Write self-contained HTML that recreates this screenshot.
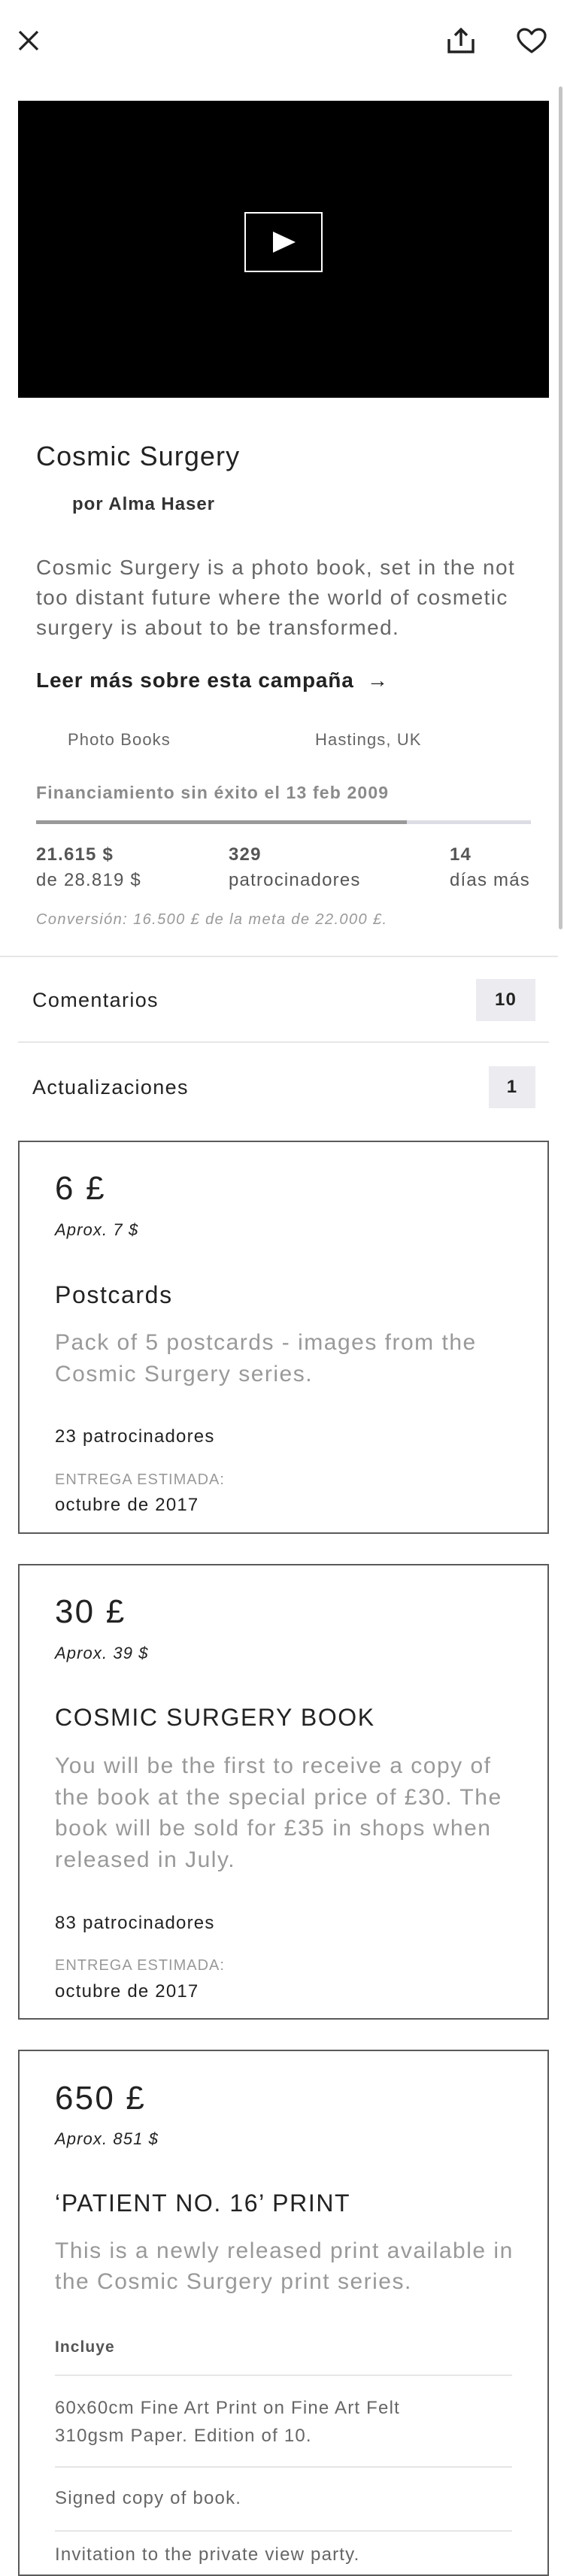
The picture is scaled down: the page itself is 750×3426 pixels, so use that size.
<!DOCTYPE html>
<html><head><meta charset="utf-8">
<style>
*{margin:0;padding:0;box-sizing:border-box}
html,body{width:750px;height:3400px;overflow:hidden;background:#fff;font-family:"Liberation Sans",sans-serif;color:#222}
#w{position:absolute;left:0;top:0;width:750px;height:3400px}
.a{position:absolute;white-space:nowrap;line-height:1;letter-spacing:0.05em}
.card{position:absolute;left:24px;width:706px;border:2px solid #5a5a5a}
.hr{position:absolute;height:2px;background:#e6e6e6}
</style></head><body><div id="w">
<svg class="a" style="left:22px;top:38px" width="32" height="32" viewBox="0 0 32 32"><path d="M4 4L28 28M28 4L4 28" stroke="#222" stroke-width="3.2" fill="none"/></svg>
<svg class="a" style="left:594px;top:36px" width="38" height="36" viewBox="0 0 38 36"><path d="M3 16V33H35V16" stroke="#222" stroke-width="3.4" fill="none"/><path d="M19 25V4M11 11L19 3L27 11" stroke="#222" stroke-width="3.4" fill="none"/></svg>
<svg class="a" style="left:686px;top:36px" width="42" height="36" viewBox="0 0 42 36"><path d="M21 33C13 27 3 20 3 11.5C3 6.5 7 3 11.5 3C15.5 3 19 5.5 21 9C23 5.5 26.5 3 30.5 3C35 3 39 6.5 39 11.5C39 20 29 27 21 33Z" stroke="#222" stroke-width="3.2" fill="none" stroke-linejoin="round"/></svg>
<div class="a" style="left:743px;top:115px;width:5px;height:1121px;background:#c4c4c4;border-radius:3px"></div>
<div class="a" style="left:24px;top:134px;width:706px;height:395px;background:#000"></div>
<div class="a" style="left:325px;top:282px;width:104px;height:80px;border:2px solid #fff"></div>
<svg class="a" style="left:361px;top:305px" width="34" height="34" viewBox="0 0 34 34"><path d="M2 3L32 17L2 31Z" fill="#fff"/></svg>
<div class="a" style="left:48px;top:589px;font-size:36px;color:#222;letter-spacing:0.03em">Cosmic Surgery</div>
<div class="a" style="left:96px;top:659px;font-size:24px;font-weight:bold;color:#333;letter-spacing:0.04em">por Alma Haser</div>
<div class="a" style="left:48px;top:735px;font-size:28px;line-height:40px;color:#666">Cosmic Surgery is a photo book, set in the not<br>too distant future where the world of cosmetic<br>surgery is about to be transformed.</div>
<div class="a" style="left:48px;top:891px;font-size:28px;font-weight:bold;color:#222;letter-spacing:0.03em">Leer más sobre esta campaña &nbsp;→</div>
<div class="a" style="left:90px;top:973px;font-size:22px;color:#666">Photo Books</div>
<div class="a" style="left:419px;top:973px;font-size:22px;color:#666">Hastings, UK</div>
<div class="a" style="left:48px;top:1043px;font-size:23px;font-weight:bold;color:#8a8a8a;letter-spacing:0.05em">Financiamiento sin éxito el 13 feb 2009</div>
<div class="a" style="left:48px;top:1091px;width:658px;height:5px;background:#dcdce4"></div>
<div class="a" style="left:48px;top:1091px;width:493px;height:5px;background:#999"></div>
<div class="a" style="left:48px;top:1125px;font-size:24px;font-weight:bold;color:#555">21.615 $</div>
<div class="a" style="left:48px;top:1159px;font-size:24px;color:#555">de 28.819 $</div>
<div class="a" style="left:304px;top:1125px;font-size:24px;font-weight:bold;color:#555">329</div>
<div class="a" style="left:304px;top:1159px;font-size:24px;color:#555">patrocinadores</div>
<div class="a" style="left:598px;top:1125px;font-size:24px;font-weight:bold;color:#555">14</div>
<div class="a" style="left:598px;top:1159px;font-size:24px;color:#555">días más</div>
<div class="a" style="left:48px;top:1213px;font-size:20px;font-style:italic;color:#999;letter-spacing:0.07em">Conversión: 16.500 £ de la meta de 22.000 £.</div>
<div class="hr" style="left:0;top:1271px;width:742px"></div>
<div class="a" style="left:43px;top:1317px;font-size:27px;color:#222">Comentarios</div>
<div class="a" style="left:633px;top:1302px;width:79px;height:56px;background:#ececf0;font-size:24px;font-weight:bold;line-height:56px;text-align:center">10</div>
<div class="hr" style="left:24px;top:1385px;width:706px"></div>
<div class="a" style="left:43px;top:1433px;font-size:27px;color:#222">Actualizaciones</div>
<div class="a" style="left:650px;top:1418px;width:62px;height:56px;background:#ececf0;font-size:24px;font-weight:bold;line-height:56px;text-align:center">1</div>
<div class="card" style="top:1517px;height:523px"></div>
<div class="a" style="left:73px;top:1559px;font-size:44px">6 £</div>
<div class="a" style="left:73px;top:1625px;font-size:22px;font-style:italic">Aprox. 7 $</div>
<div class="a" style="left:73px;top:1706px;font-size:32px">Postcards</div>
<div class="a" style="left:73px;top:1765px;font-size:30px;line-height:42px;color:#999">Pack of 5 postcards - images from the<br>Cosmic Surgery series.</div>
<div class="a" style="left:73px;top:1899px;font-size:24px">23 patrocinadores</div>
<div class="a" style="left:73px;top:1958px;font-size:20px;color:#999">ENTREGA ESTIMADA:</div>
<div class="a" style="left:73px;top:1990px;font-size:24px">octubre de 2017</div>
<div class="card" style="top:2080px;height:606px"></div>
<div class="a" style="left:73px;top:2122px;font-size:44px">30 £</div>
<div class="a" style="left:73px;top:2188px;font-size:22px;font-style:italic">Aprox. 39 $</div>
<div class="a" style="left:73px;top:2268px;font-size:32px">COSMIC SURGERY BOOK</div>
<div class="a" style="left:73px;top:2328px;font-size:30px;line-height:41.5px;color:#999">You will be the first to receive a copy of<br>the book at the special price of £30. The<br>book will be sold for £35 in shops when<br>released in July.</div>
<div class="a" style="left:73px;top:2546px;font-size:24px">83 patrocinadores</div>
<div class="a" style="left:73px;top:2604px;font-size:20px;color:#999">ENTREGA ESTIMADA:</div>
<div class="a" style="left:73px;top:2637px;font-size:24px">octubre de 2017</div>
<div class="card" style="top:2726px;height:700px"></div>
<div class="a" style="left:73px;top:2769px;font-size:44px">650 £</div>
<div class="a" style="left:73px;top:2834px;font-size:22px;font-style:italic">Aprox. 851 $</div>
<div class="a" style="left:73px;top:2914px;font-size:32px">‘PATIENT NO. 16’ PRINT</div>
<div class="a" style="left:73px;top:2973px;font-size:30px;line-height:41px;color:#999">This is a newly released print available in<br>the Cosmic Surgery print series.</div>
<div class="a" style="left:73px;top:3111px;font-size:21px;font-weight:bold;color:#555">Incluye</div>
<div class="hr" style="left:73px;top:3158px;width:608px"></div>
<div class="a" style="left:73px;top:3184px;font-size:24px;line-height:37px;color:#666">60x60cm Fine Art Print on Fine Art Felt<br>310gsm Paper. Edition of 10.</div>
<div class="hr" style="left:73px;top:3280px;width:608px"></div>
<div class="a" style="left:73px;top:3311px;font-size:24px;color:#666">Signed copy of book.</div>
<div class="hr" style="left:73px;top:3365px;width:608px"></div>
<div class="a" style="left:73px;top:3386px;font-size:24px;color:#666">Invitation to the private view party.</div>
</div></body></html>
